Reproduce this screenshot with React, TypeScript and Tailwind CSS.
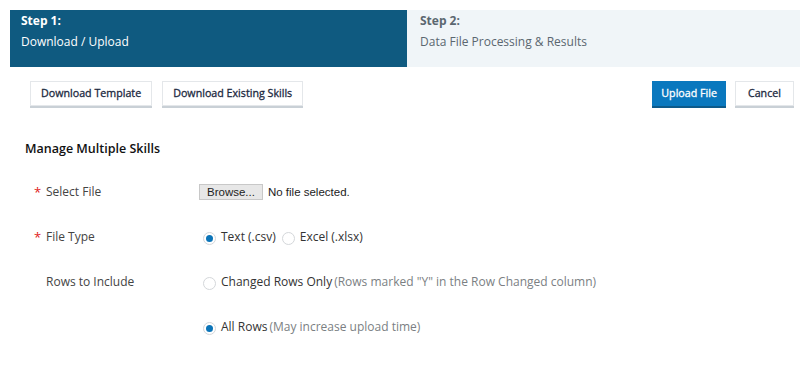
import React from 'react';

type RadioProps = { checked?: boolean; label: string; note?: string };

function Radio({ checked, label, note }: RadioProps) {
  return (
    <label className="flex items-center text-[12px] text-[#333]">
      <span className="relative mr-[5px] mt-[3px] flex h-[13px] w-[13px] items-center justify-center rounded-full border border-[#d4d7da] bg-white">
        {checked && <span className="h-[7px] w-[7px] rounded-full bg-[#0b74b8]" />}
      </span>
      <span className="leading-none">{label}</span>
      {note && <span className="ml-[2px] leading-none text-[#7b7f83]">{note}</span>}
    </label>
  );
}

function Field({ label, required, children }: { label: string; required?: boolean; children: React.ReactNode }) {
  return (
    <div className="flex h-[45px] items-center">
      <div className="flex w-[189px] items-center pl-[24px] text-[12px] text-[#444]">
        <span className="w-[12px] text-[13px] text-[#e02020]">{required ? '*' : ''}</span>
        <span>{label}</span>
      </div>
      <div className="flex items-center gap-[5px]">{children}</div>
    </div>
  );
}

const btn =
  'h-[25px] border border-[#e4e7ea] bg-white px-[10px] text-[10.7px] text-[#1b2940] shadow-[0_2px_0_#c9d0d6] [-webkit-text-stroke:0.3px_currentColor]';

export default function App() {
  return (
    <div className="h-[371px] w-[810px] bg-white p-[10px] font-['Open_Sans',sans-serif]">
      <div className="flex h-[57px]">
        <div className="w-[397px] bg-[#0f5a80] px-[11px] text-[12px] leading-[21px] text-white">
          <div className="font-bold">Step 1:</div>
          <div>Download / Upload</div>
        </div>
        <div className="flex-1 bg-[#f0f5f8] px-[13px] text-[12px] leading-[21px] text-[#5b6770]">
          <div className="font-bold">Step 2:</div>
          <div>Data File Processing &amp; Results</div>
        </div>
      </div>

      <div className="mt-[14px] flex items-center justify-between pl-[20px] pr-[6px]">
        <div className="flex gap-[10px]">
          <button className={btn}>Download Template</button>
          <button className={btn}>Download Existing Skills</button>
        </div>
        <div className="flex gap-[9px]">
          <button className="h-[25px] bg-[#0a78be] px-[9px] text-[10.7px] text-white shadow-[0_2px_0_#0d5a8a] [-webkit-text-stroke:0.3px_currentColor]">
            Upload File
          </button>
          <button className={`${btn} !px-[12px]`}>Cancel</button>
        </div>
      </div>

      <h2 className="mt-[34px] pl-[15px] text-[12.5px] font-semibold text-[#111]">Manage Multiple Skills</h2>

      <div className="mt-[11px]">
        <Field label="Select File" required>
          <button className="h-[16px] border border-[#c8c8c8] bg-[#e7e7e7] px-[7px] font-['Liberation_Sans',sans-serif] text-[11.5px] leading-none text-[#222]">
            Browse...
          </button>
          <span className="font-['Liberation_Sans',sans-serif] text-[11.5px] text-[#222]">No file selected.</span>
        </Field>
        <Field label="File Type" required>
          <div className="flex gap-[6px] pl-[4px]">
            <Radio checked label="Text (.csv)" />
            <Radio label="Excel (.xlsx)" />
          </div>
        </Field>
        <Field label="Rows to Include">
          <div className="pl-[4px]">
            <Radio label="Changed Rows Only" note={'(Rows marked "Y" in the Row Changed column)'} />
          </div>
        </Field>
        <Field label="">
          <div className="pl-[4px]">
            <Radio checked label="All Rows" note="(May increase upload time)" />
          </div>
        </Field>
      </div>
    </div>
  );
}
